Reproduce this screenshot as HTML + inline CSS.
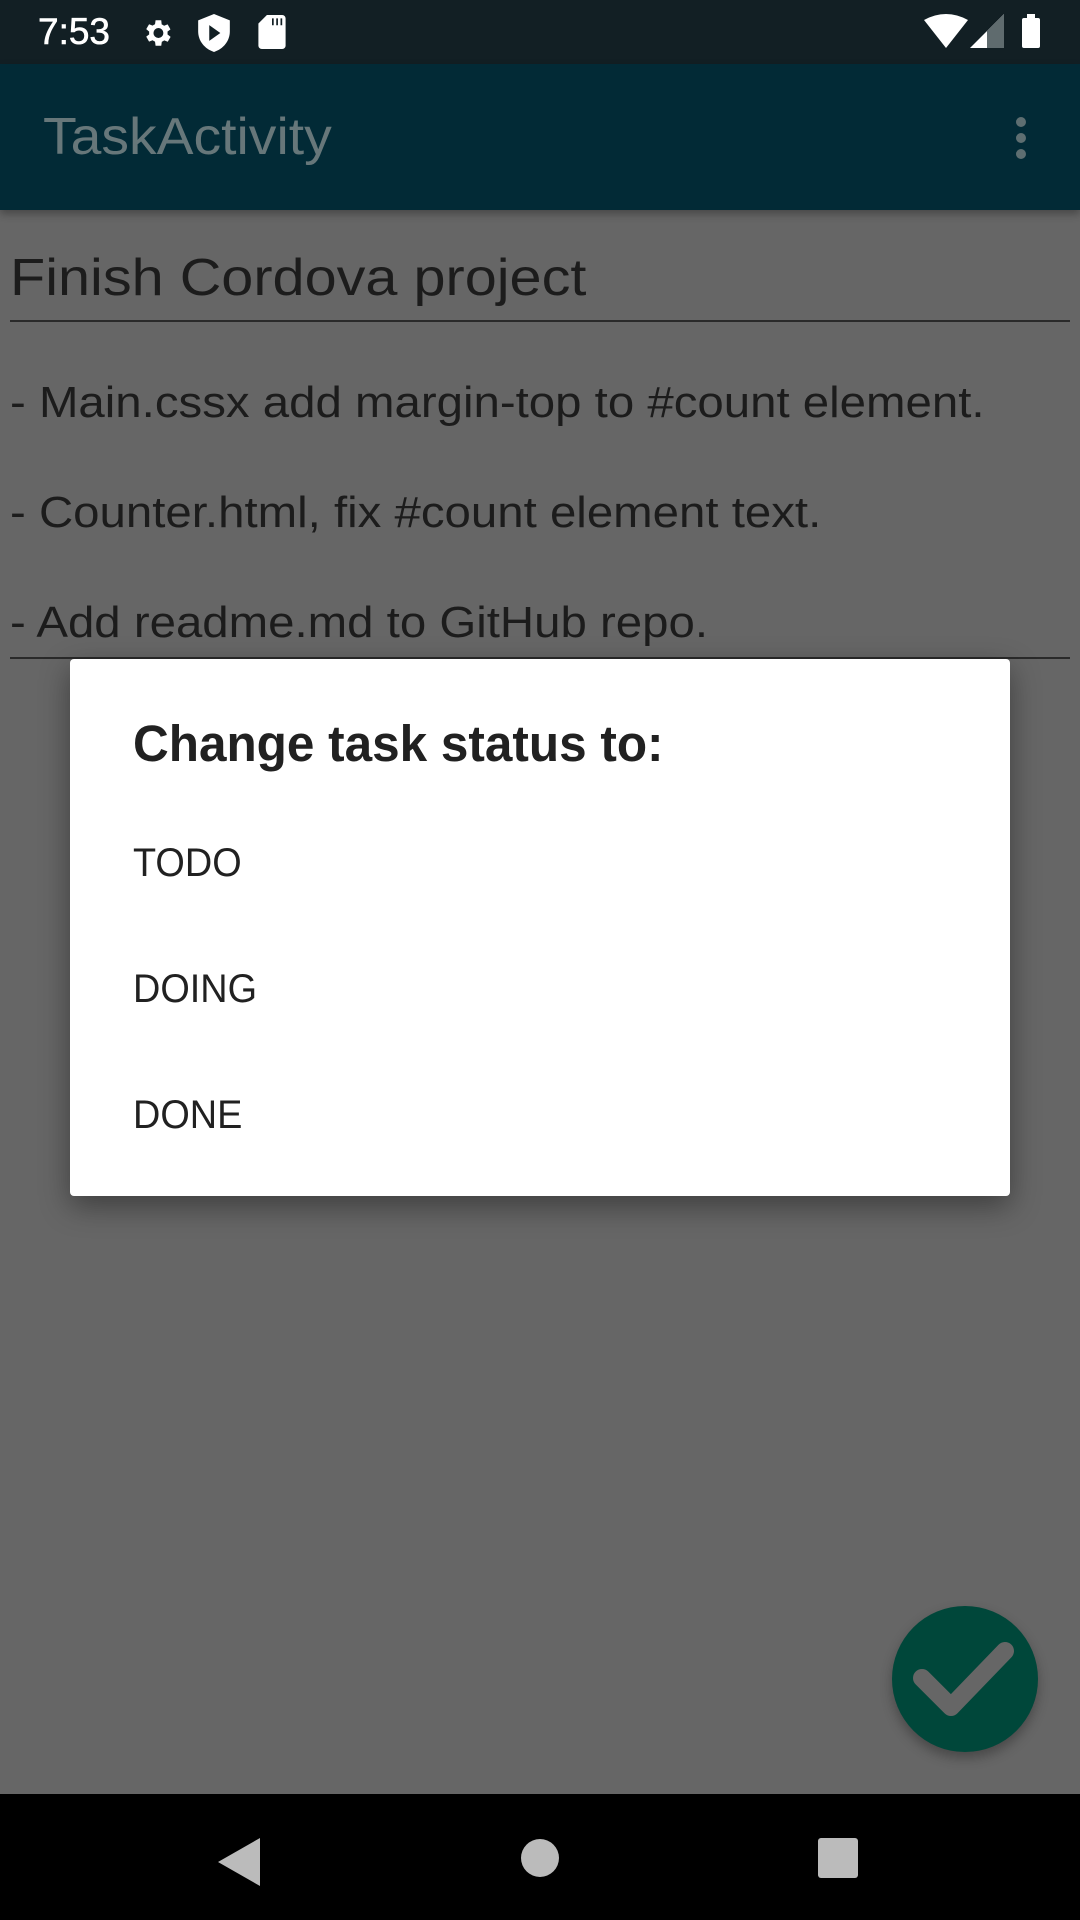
<!DOCTYPE html>
<html><head><meta charset="utf-8"><style>
*{margin:0;padding:0;box-sizing:border-box}
body{width:1080px;height:1920px;position:relative;overflow:hidden;background:#666;font-family:"Liberation Sans",Roboto,sans-serif}
.sb{position:absolute;left:0;top:0;width:1080px;height:64px;background:#121f24;color:#fff}
.ab{position:absolute;left:0;top:64px;width:1080px;height:146px;background:#022a36;box-shadow:0 4px 8px rgba(0,0,0,.3)}
.t{position:absolute;color:#1c1c1c;white-space:nowrap;transform-origin:0 50%}
.dlg{position:absolute;left:70px;top:659px;width:940px;height:537px;background:#fff;border-radius:4px;box-shadow:0 10px 30px rgba(0,0,0,.4)}
.nav{position:absolute;left:0;top:1794px;width:1080px;height:126px;background:#000}
</style></head><body>
<div class="sb">
<div style="position:absolute;left:38px;top:11px;font-size:37px;color:#fff;-webkit-text-stroke:0.6px #fff">7:53</div>
<svg style="position:absolute;left:140px;top:16px" width="34" height="34" viewBox="0 0 24 24"><path fill="#fff" d="M19.4 13a7.5 7.5 0 000-2l2.1-1.6-2-3.5-2.5 1a7 7 0 00-1.7-1L15 3h-4l-.4 2.8a7 7 0 00-1.7 1l-2.5-1-2 3.5L6.5 11a7.5 7.5 0 000 2l-2.1 1.6 2 3.5 2.5-1a7 7 0 001.7 1L11 21h4l.4-2.8a7 7 0 001.7-1l2.5 1 2-3.5zM13 15.5a3.5 3.5 0 110-7 3.5 3.5 0 010 7z"/></svg>
<svg style="position:absolute;left:198px;top:14px" width="32" height="38" viewBox="0 0 20 24"><path fill="#fff" d="M10 0L0 4v7c0 6 4 11 10 13 6-2 10-7 10-13V4z"/><path fill="#121f24" d="M7 7v10l7-5z"/></svg>
<svg style="position:absolute;left:258px;top:15px" width="28" height="34" viewBox="0 0 16 20"><path fill="#fff" d="M5 0h9a2 2 0 012 2v16a2 2 0 01-2 2H2a2 2 0 01-2-2V5z"/><path fill="#121f24" d="M8 2h1v4H8zM10.5 2h1v4h-1zM13 2h1v4h-1z"/></svg>
<svg style="position:absolute;left:924px;top:14px" width="44" height="34" viewBox="0 0 44 34"><path fill="#fff" d="M0 6Q22-6 44 6L22 34z"/></svg>
<svg style="position:absolute;left:970px;top:14px" width="34" height="34" viewBox="0 0 34 34"><path fill="#fff" d="M34 0V34H0z"/><path fill="#5f6b6e" d="M34 0V34H17V17z"/></svg>
<div style="position:absolute;left:1022px;top:18px;width:18px;height:30px;background:#fff;border-radius:2px"></div>
<div style="position:absolute;left:1027px;top:14px;width:8px;height:5px;background:#fff"></div>
</div>
<div class="ab">
<div class="t" style="left:43px;top:43px;font-size:52px;color:#67777a;transform:scaleX(1.063)">TaskActivity</div>
<div style="position:absolute;left:1016px;top:53px;width:10px;height:10px;border-radius:50%;background:#5e6e71;box-shadow:0 16px 0 #5e6e71,0 32px 0 #5e6e71"></div>
</div>
<div class="t" style="left:10px;top:248px;font-size:52px;transform:scaleX(1.108)">Finish Cordova project</div>
<div style="position:absolute;left:10px;top:320px;width:1060px;height:2px;background:#2a2a2a"></div>
<div class="t" style="left:10px;top:378px;font-size:44px;transform:scaleX(1.077)">- Main.cssx add margin-top to #count element.</div>
<div class="t" style="left:10px;top:488px;font-size:44px;transform:scaleX(1.077)">- Counter.html, fix #count element text.</div>
<div class="t" style="left:10px;top:598px;font-size:44px;transform:scaleX(1.077)">- Add readme.md to GitHub repo.</div>
<div style="position:absolute;left:10px;top:657px;width:1060px;height:2px;background:#2a2a2a"></div>
<div class="dlg">
<div class="t" style="left:63px;top:55px;font-size:51px;font-weight:bold;color:#212121;transform:scaleX(0.97)">Change task status to:</div>
<div class="t" style="left:63px;top:182px;font-size:40px;color:#212121;transform:scaleX(0.946)">TODO</div>
<div class="t" style="left:63px;top:308px;font-size:40px;color:#212121;transform:scaleX(0.946)">DOING</div>
<div class="t" style="left:63px;top:434px;font-size:40px;color:#212121;transform:scaleX(0.946)">DONE</div>
</div>
<div style="position:absolute;left:892px;top:1606px;width:146px;height:146px;border-radius:50%;background:#00473a;box-shadow:0 6px 12px rgba(0,0,0,.3)"></div>
<svg style="position:absolute;left:892px;top:1606px" width="146" height="146" viewBox="0 0 146 146"><path d="M30 72L59 101L113 45" fill="none" stroke="#666" stroke-width="18" stroke-linecap="round" stroke-linejoin="round"/></svg>
<div class="nav">
<svg style="position:absolute;left:218px;top:44px" width="42" height="48" viewBox="0 0 42 48"><path fill="#bbb" d="M42 0V48L0 24z"/></svg>
<div style="position:absolute;left:521px;top:45px;width:38px;height:38px;border-radius:50%;background:#bbb"></div>
<div style="position:absolute;left:818px;top:44px;width:40px;height:40px;border-radius:3px;background:#bbb"></div>
</div>
</body></html>
